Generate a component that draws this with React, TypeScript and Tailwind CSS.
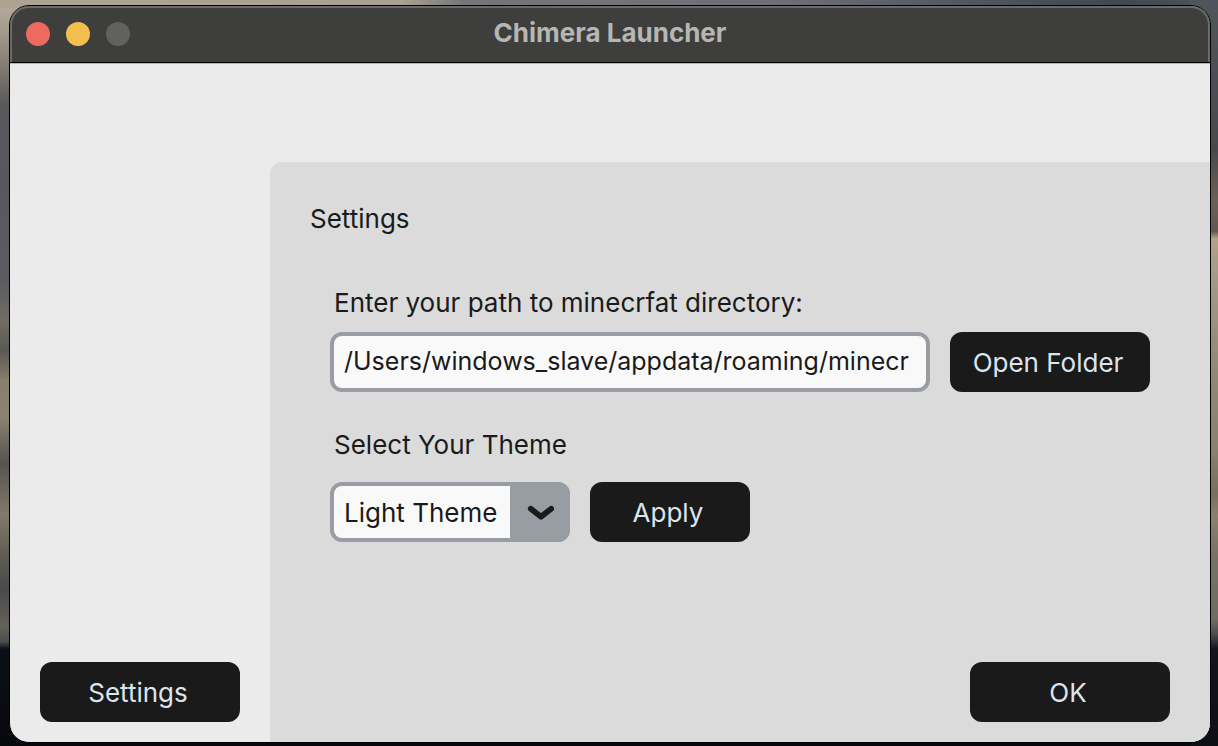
import { useState } from "react";
import type { ButtonHTMLAttributes } from "react";

const DEFAULT_PATH = "/Users/windows_slave/appdata/roaming/minecr";

function ActionButton({ className = "", ...props }: ButtonHTMLAttributes<HTMLButtonElement>) {
  return (
    <button
      type="button"
      className={`h-[60px] shrink-0 rounded-xl bg-[#1a1a1a] pr-1 text-[26px] text-[#dce4ee] hover:bg-[#2a2a2a] ${className}`}
      {...props}
    />
  );
}

function TitleBar() {
  return (
    <header className="flex h-[58px] shrink-0 items-center rounded-t-[19px] border-b border-b-[#b4b4b2] bg-black pb-px">
      <div className="grid h-full w-full grid-cols-[1fr_auto_1fr] items-center rounded-t-[19px] border-x-2 border-t-2 border-[#6b6b6a] bg-[#3e3e3c] px-[14px] pb-[2px]">
        <div className="flex gap-4">
          <button type="button" aria-label="Close" className="size-6 rounded-full bg-[#ed6a5e]" />
          <button type="button" aria-label="Minimize" className="size-6 rounded-full bg-[#f5bf4f]" />
          <button type="button" aria-label="Zoom" disabled className="size-6 rounded-full bg-[#616160]" />
        </div>
        <h1 className="pb-[3px] text-[26px] leading-8 font-bold text-[#b6b6b5]">Chimera Launcher</h1>
      </div>
    </header>
  );
}

function ThemeSelect({ value, onChange }: { value: string; onChange: (value: string) => void }) {
  return (
    <div className="relative h-[60px] w-60 shrink-0">
      <select
        id="theme"
        value={value}
        onChange={(event) => onChange(event.target.value)}
        className="h-full w-full appearance-none rounded-xl border-4 border-[#979da2] bg-[#f9f9fa] pr-[60px] pl-[10px] text-[26px]"
      >
        <option>Light Theme</option>
        <option>Dark Theme</option>
      </select>
      <span className="pointer-events-none absolute inset-y-0 right-0 flex w-[60px] items-center justify-center rounded-r-xl bg-[#979da2]">
        <svg viewBox="0 0 28 16" className="h-4 w-7" fill="none" aria-hidden="true">
          <path
            d="M4.8 4.8 L15 12.8 L25.2 4.8"
            stroke="#1a1a1a"
            strokeWidth="5.8"
            strokeLinecap="round"
            strokeLinejoin="round"
          />
        </svg>
      </span>
    </div>
  );
}

export default function App() {
  const [path, setPath] = useState(DEFAULT_PATH);
  const [theme, setTheme] = useState("Light Theme");

  return (
    <div className="flex min-h-screen bg-[linear-gradient(180deg,#b5ab9c_0%,#a69d90_4%,#817b73_9%,#58595b_14%,#56585c_25%,#5c5d60_38%,#716d65_43%,#5a5955_47%,#887f6d_51%,#8b8270_56%,#555452_62%,#827b6a_69%,#5d5a54_75%,#494a4a_79%,#646158_84%,#4c4e4d_86%,#0c1016_87%,#07080c_100%)] bg-[#07080c] bg-no-repeat">
      <div className="flex flex-1 bg-[linear-gradient(90deg,#aca392_0%,#aaa192_33%,#75767a_38%,#73747a_50%,#6c6d75_65%,#51565e_80%,#42474f_92%,#50555c_100%)] bg-[length:100%_8px] bg-no-repeat">
        <div className="flex flex-1 bg-[linear-gradient(180deg,#50555c_0%,#4b4f55_10%,#48494d_20%,#6b6157_27%,#62584f_31%,#b3a184_32%,#a69c88_36%,#8f8875_50%,#8a8270_60%,#77705f_66%,#8a806c_69%,#777266_75%,#6f6b62_83%,#4b4e50_85%,#12161c_87%,#0c1016_100%)] bg-[length:28px_100%] bg-right bg-no-repeat pt-[5px] pr-[7px] pb-[3px] pl-[9px] font-[Inter,'Liberation_Sans',sans-serif] text-[#1a1a1a]">
          <div className="flex min-w-0 flex-1 flex-col rounded-[20px] border border-black bg-[#ebebeb]">
            <TitleBar />
            <div className="grid flex-1 grid-cols-[260px_minmax(0,1fr)]">
              <nav className="flex items-end px-[30px] pb-5">
                <ActionButton className="w-[200px]">Settings</ActionButton>
              </nav>
              <main className="mt-[98px] flex flex-col rounded-tl-xl rounded-br-[19px] bg-[#dbdbdb] pt-[41px] pr-10 pb-5 pl-10 text-[26px]">
                <h2 className="leading-8">Settings</h2>
                <form className="flex flex-col pt-[52px] pr-5 pl-5" onSubmit={(event) => event.preventDefault()}>
                  <label htmlFor="path" className="pl-1 leading-8">
                    Enter your path to minecrfat directory:
                  </label>
                  <div className="flex gap-5 pt-[13px]">
                    <input
                      id="path"
                      type="text"
                      value={path}
                      onChange={(event) => setPath(event.target.value)}
                      className="h-[60px] min-w-0 flex-1 rounded-xl border-4 border-[#979da2] bg-[#f9f9fa] px-[10px] pb-[2px] text-[25px]"
                    />
                    <ActionButton className="w-[200px]">Open Folder</ActionButton>
                  </div>
                  <label htmlFor="theme" className="pt-[37px] pl-1 leading-8">
                    Select Your Theme
                  </label>
                  <div className="flex gap-5 pt-[21px]">
                    <ThemeSelect value={theme} onChange={setTheme} />
                    <ActionButton className="w-40">Apply</ActionButton>
                  </div>
                </form>
                <div className="mt-auto flex justify-end pt-10">
                  <ActionButton className="w-[200px]">OK</ActionButton>
                </div>
              </main>
            </div>
          </div>
        </div>
      </div>
    </div>
  );
}
